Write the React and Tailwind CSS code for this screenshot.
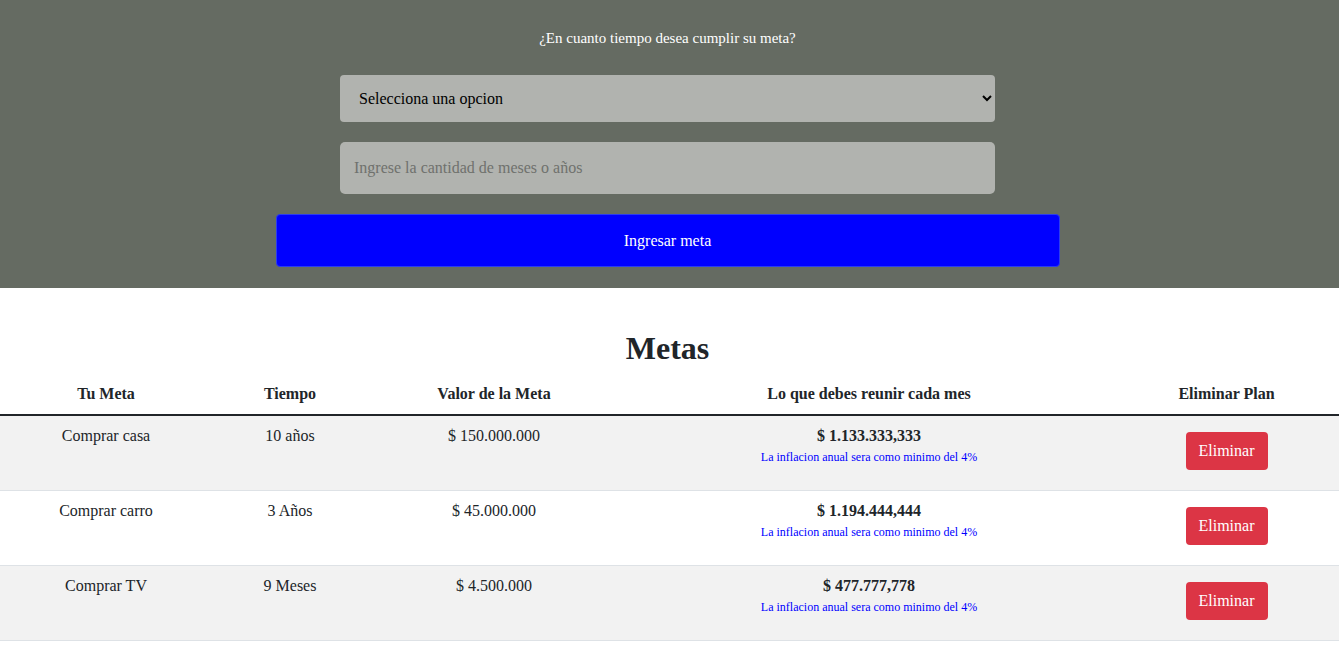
import { useState } from "react";

const metas = [
  { meta: "Comprar casa", tiempo: "10 años", valor: "$ 150.000.000", mes: "$ 1.133.333,333" },
  { meta: "Comprar carro", tiempo: "3 Años", valor: "$ 45.000.000", mes: "$ 1.194.444,444" },
  { meta: "Comprar TV", tiempo: "9 Meses", valor: "$ 4.500.000", mes: "$ 477.777,778" },
];

export default function App() {
  const [opcion, setOpcion] = useState("");
  const [cantidad, setCantidad] = useState("");

  return (
    <div className="min-h-screen bg-white text-[#212529] text-base font-['Liberation_Serif',serif]">
      {/* Formulario */}
      <div className="bg-[#656b62] pt-[29px] pb-[21px] pr-1 flex flex-col items-center">
        <p className="text-white text-[15px] leading-[18px] mb-[28px]">¿En cuanto tiempo desea cumplir su meta?</p>
        <select
          value={opcion}
          onChange={(e) => setOpcion(e.target.value)}
          className="w-[655px] h-[47px] rounded-[4px] bg-[#b1b3af] text-black pl-[15px] pr-2 outline-none"
        >
          <option value="">Selecciona una opcion</option>
          <option value="meses">Meses</option>
          <option value="anios">Años</option>
        </select>
        <input
          value={cantidad}
          onChange={(e) => setCantidad(e.target.value)}
          placeholder="Ingrese la cantidad de meses o años"
          className="mt-[20px] w-[655px] h-[52px] rounded-[5px] bg-[#b1b3af] px-[14px] outline-none placeholder:text-[#6f716d]"
        />
        <button className="mt-[20px] w-[784px] h-[53px] rounded-[4px] bg-[#0000ff] border border-[#2b3cf0] text-white">
          Ingresar meta
        </button>
      </div>

      {/* Tabla */}
      <h2 className="text-[32px] leading-[38px] font-bold text-center mt-[41px] mb-[7px] pr-1">Metas</h2>
      <table className="w-full table-fixed border-collapse text-center">
        <colgroup>
          <col className="w-[212px]" />
          <col className="w-[156px]" />
          <col className="w-[252px]" />
          <col className="w-[498px]" />
          <col />
        </colgroup>
        <thead>
          <tr className="border-b-2 border-[#212529]">
            <th className="py-2 leading-6 font-bold">Tu Meta</th>
            <th className="py-2 leading-6 font-bold">Tiempo</th>
            <th className="py-2 leading-6 font-bold">Valor de la Meta</th>
            <th className="py-2 leading-6 font-bold">Lo que debes reunir cada mes</th>
            <th className="py-2 pr-1 leading-6 font-bold">Eliminar Plan</th>
          </tr>
        </thead>
        <tbody>
          {metas.map((m, i) => (
            <tr key={m.meta} className={`h-[75px] border-b border-[#dee2e6] ${i % 2 === 0 ? "bg-[#f2f2f2]" : "bg-white"}`}>
              <td className="align-top pt-2 leading-6">{m.meta}</td>
              <td className="align-top pt-2 leading-6">{m.tiempo}</td>
              <td className="align-top pt-2 leading-6">{m.valor}</td>
              <td className="align-top pt-2">
                <p className="font-bold leading-6">{m.mes}</p>
                <p className="text-[12px] leading-[18px] text-[#0000ff]">La inflacion anual sera como minimo del 4%</p>
              </td>
              <td className="align-top pt-4 pr-1">
                <button className="w-[82px] h-[38px] rounded-[4px] bg-[#dc3545] text-white">Eliminar</button>
              </td>
            </tr>
          ))}
        </tbody>
      </table>
    </div>
  );
}
